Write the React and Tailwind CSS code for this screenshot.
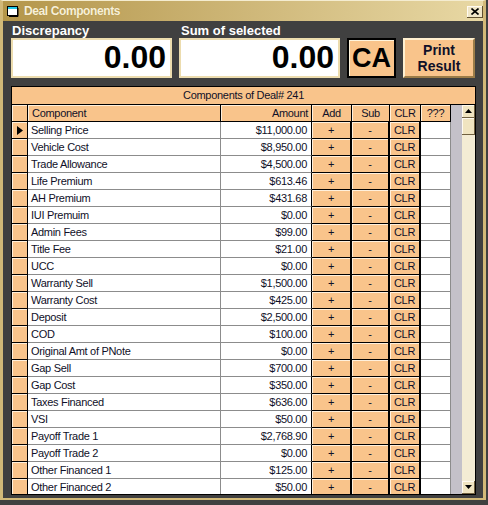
import React from "react";

const rows = [
  ["Selling Price", "$11,000.00"],
  ["Vehicle Cost", "$8,950.00"],
  ["Trade Allowance", "$4,500.00"],
  ["Life Premium", "$613.46"],
  ["AH Premium", "$431.68"],
  ["IUI Premuim", "$0.00"],
  ["Admin Fees", "$99.00"],
  ["Title Fee", "$21.00"],
  ["UCC", "$0.00"],
  ["Warranty Sell", "$1,500.00"],
  ["Warranty Cost", "$425.00"],
  ["Deposit", "$2,500.00"],
  ["COD", "$100.00"],
  ["Original Amt of PNote", "$0.00"],
  ["Gap Sell", "$700.00"],
  ["Gap Cost", "$350.00"],
  ["Taxes Financed", "$636.00"],
  ["VSI", "$50.00"],
  ["Payoff Trade 1", "$2,768.90"],
  ["Payoff Trade 2", "$0.00"],
  ["Other Financed 1", "$125.00"],
  ["Other Financed 2", "$50.00"],
];

const bevel = "shadow-[inset_1px_1px_0_#fff0dc]";
const btnCell = `bg-[#f9c48b] border-r-2 border-b border-black flex items-center justify-center ${bevel}`;

const ScrollBtn = ({ up }) => (
  <div className="h-[13px] w-[13px] bg-[#f0e4c0] border-r border-b border-[#706040] shadow-[inset_1px_1px_0_#fffaf0] flex items-center justify-center">
    <svg width="7" height="4" viewBox="0 0 7 4">
      {up ? <path d="M0 4 L3.5 0 L7 4 Z" fill="#000" /> : <path d="M0 0 L7 0 L3.5 4 Z" fill="#000" />}
    </svg>
  </div>
);

const DealGrid = () => (
  <div className="mt-[8px] h-[409px] border border-black bg-white flex flex-col overflow-hidden text-[11px] tracking-[-0.3px] text-[#101028]">
    <div className="h-[18px] shrink-0 bg-[#f9c48b] border-b border-black flex items-center justify-center leading-[17px]">
      Components of Deal# 241
    </div>
    <div className="flex flex-1 min-h-0">
      <div className="w-[450px] bg-[#c4c1c9] overflow-hidden">
        <div className="flex h-[17px] leading-[17px]">
          <div className={`w-[16px] bg-[#f9c48b] border-r border-b border-black ${bevel}`} />
          <div className={`w-[193px] bg-[#f9c48b] border-r border-b border-black pl-[4px] ${bevel}`}>Component</div>
          <div className={`w-[91px] bg-[#f9c48b] border-r border-b border-black pr-[3px] text-right ${bevel}`}>Amount</div>
          <div className={`w-[40px] bg-[#f9c48b] border-r border-b border-black text-center ${bevel}`}>Add</div>
          <div className={`w-[38px] bg-[#f9c48b] border-r border-b border-black text-center ${bevel}`}>Sub</div>
          <div className={`w-[31px] bg-[#f9c48b] border-r border-b border-black text-center ${bevel}`}>CLR</div>
          <div className={`w-[30px] bg-[#f9c48b] border-r border-b border-black text-center ${bevel}`}>???</div>
        </div>
        {rows.map(([name, amount], i) => (
          <div key={name} className="flex h-[17px] leading-[17px]">
            <div className={`w-[16px] bg-[#f9c48b] border-r border-b border-black flex items-center justify-center ${bevel}`}>
              {i === 0 && (
                <svg width="6" height="9" viewBox="0 0 6 9">
                  <path d="M0 0 L6 4.5 L0 9 Z" fill="#000" />
                </svg>
              )}
            </div>
            <div className="w-[193px] bg-white border-r border-b border-[#8c8c8c] pl-[3px] whitespace-nowrap">{name}</div>
            <div className="w-[91px] bg-white border-r border-b border-b-[#8c8c8c] border-r-black pr-[4px] text-right">{amount}</div>
            <div className={`w-[40px] ${btnCell}`}>+</div>
            <div className={`w-[38px] ${btnCell}`}>-</div>
            <div className={`w-[31px] ${btnCell} border-r`}>CLR</div>
            <div className="w-[30px] bg-white border-r border-b border-[#8c8c8c]" />
          </div>
        ))}
      </div>
      <div className="w-[13px] bg-[#f4ecd4] flex flex-col">
        <ScrollBtn up />
        <div className="h-[17px] bg-[#f0e4c0] border-r border-b border-[#706040] shadow-[inset_1px_1px_0_#fffaf0]" />
        <div className="flex-1" />
        <ScrollBtn />
      </div>
    </div>
  </div>
);

export default function App() {
  return (
    <div className="w-[488px] h-[505px] bg-[#404040] pr-[2px] pb-[5px] overflow-hidden font-['Liberation_Sans',Arial,sans-serif]">
      <div className="h-full flex flex-col border-l-[3px] border-r-[3px] border-b-[2px] border-[#d2b978] border-t border-t-[#f4ecd0]">
        <div className="h-[20px] shrink-0 flex items-center bg-gradient-to-r from-[#b4964a] to-[#e8d8a4] pl-[4px]">
          <svg width="12" height="11" viewBox="0 0 12 11" className="shrink-0">
            <rect x="0.5" y="0.5" width="10" height="9" fill="#ffffff" stroke="#000" />
            <rect x="1" y="1" width="9" height="2" fill="#20c8e8" />
            <path d="M11 2 V10.5 H2" stroke="#000" fill="none" />
          </svg>
          <span className="ml-[5px] text-[12px] font-bold tracking-[-0.4px] text-[#f8f0d8] [text-shadow:0_0_1px_#a08840]">Deal Components</span>
          <div className="ml-auto mt-[2px] w-[16px] h-[12px] bg-[#f0e6c8] border-r border-b border-[#605030] shadow-[inset_1px_1px_0_#fffaf0] flex items-center justify-center">
            <svg width="8" height="7" viewBox="0 0 8 7">
              <path d="M0.5 0.5 L7.5 6.5 M7.5 0.5 L0.5 6.5" stroke="#000" strokeWidth="1.6" />
            </svg>
          </div>
        </div>
        <div className="flex-1 bg-[#404040] pl-[8px] pr-[7px] pt-[1px]">
          <div className="grid grid-cols-[161px_161px_49px_72px] gap-x-[7px]">
            <div className="h-[16px] leading-[18px] pl-[1px] text-[13px] font-bold text-white">Discrepancy</div>
            <div className="h-[16px] leading-[18px] pl-[2px] text-[13px] font-bold text-white">Sum of selected</div>
            <div />
            <div />
            <div className="h-[40px] bg-white border-2 border-[#ecdcae] text-right pr-[4px] text-[32px] font-bold leading-[35px] text-black">0.00</div>
            <div className="h-[40px] bg-white border-2 border-[#ecdcae] text-right pr-[4px] text-[32px] font-bold leading-[35px] text-black">0.00</div>
            <div className="h-[40px] bg-[#f9c48b] border-2 border-black shadow-[inset_1px_1px_0_#fff4dc] flex items-center justify-center text-[27px] font-bold text-black">CA</div>
            <div className="h-[40px] bg-[#f9c48b] border-2 border-t-[#fff0d0] border-l-[#fff0d0] border-r-[#9c7c48] border-b-[#9c7c48] flex flex-col items-center justify-center text-[14px] font-bold leading-[16px] text-[#101028]">
              <span>Print</span>
              <span>Result</span>
            </div>
          </div>
          <DealGrid />
        </div>
      </div>
    </div>
  );
}
